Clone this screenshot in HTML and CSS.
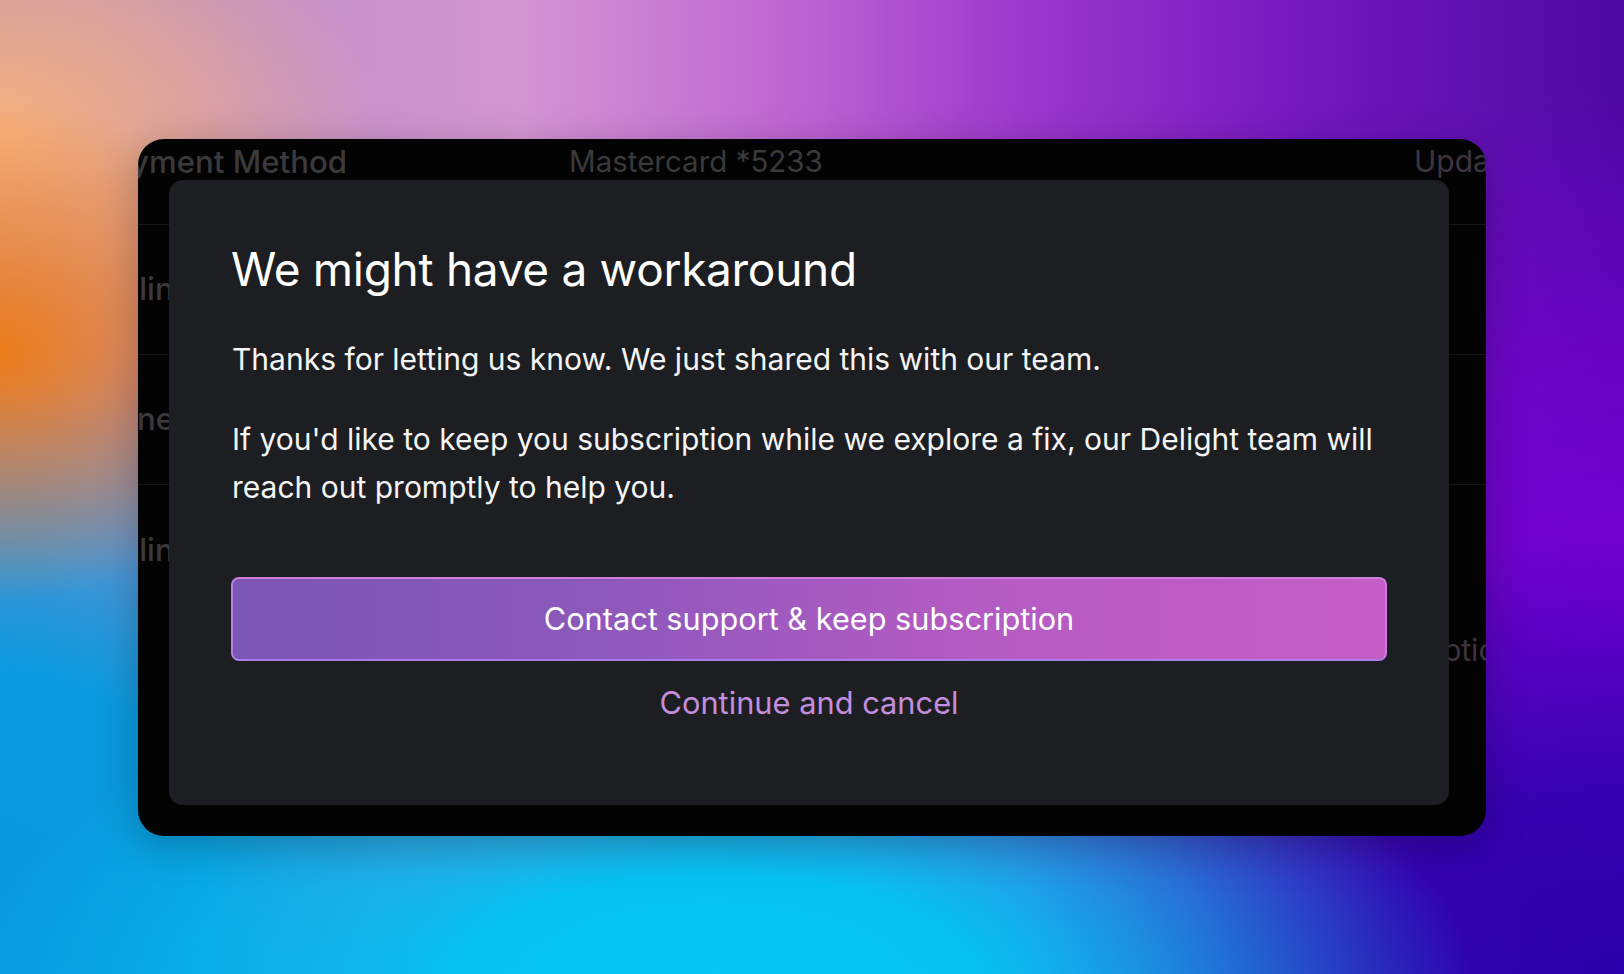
FILE: index.html
```html
<!DOCTYPE html>
<html lang="en">
<head>
<meta charset="utf-8">
<title>We might have a workaround</title>
<link rel="stylesheet" href="styles.css">
</head>
<body>
<main class="stage">
  <section class="window">
    <div class="table">
      <div class="row row-head">
        <span class="cell label">Payment Method</span>
        <span class="cell value">Mastercard *5233</span>
        <span class="cell action">Update</span>
      </div>
      <div class="row">
        <span class="cell label lbl-billing">Billing cycle</span>
        <span class="cell value"></span>
        <span class="cell action"></span>
      </div>
      <div class="row">
        <span class="cell label lbl-renew">Renewal date</span>
        <span class="cell value"></span>
        <span class="cell action"></span>
      </div>
      <div class="row row-plain">
        <span class="cell label lbl-billing">Billing email</span>
        <span class="cell value"></span>
        <span class="cell action"></span>
      </div>
      <div class="row row-last">
        <span class="cell label"></span>
        <span class="cell value"></span>
        <span class="cell action act-options">Options</span>
      </div>
    </div>

    <div class="dialog" role="dialog" aria-labelledby="dlg-title">
      <h1 class="dialog-title" id="dlg-title">We might have a workaround</h1>
      <p class="dialog-text">Thanks for letting us know. We just shared this with our team.</p>
      <p class="dialog-text dialog-text-2">If you'd like to keep you subscription while we explore a fix, our Delight team will reach out promptly to help you.</p>
      <button class="btn-primary" type="button">Contact support &amp; keep subscription</button>
      <button class="btn-link" type="button">Continue and cancel</button>
    </div>
  </section>
</main>
</body>
</html>
```

FILE: styles.css
```css
* { box-sizing: border-box; }

html, body {
  margin: 0;
  padding: 0;
  width: 1624px;
  height: 974px;
  overflow: hidden;
}

body {
  font-family: Inter, "Noto Sans", "Liberation Sans", sans-serif;
  background:
    radial-gradient(ellipse 300px 250px at 0% 36%, #ec7c1a 0%, rgba(236,124,26,0.6) 40%, rgba(236,124,26,0) 100%),
    radial-gradient(ellipse 380px 300px at 0% 14%, #f7b27e 0%, rgba(247,178,126,0.6) 45%, rgba(247,178,126,0) 100%),
    radial-gradient(ellipse 760px 340px at 44% 102%, #04c6f4 0%, #06c2f2 35%, rgba(8,190,242,0) 100%),
    radial-gradient(ellipse 520px 560px at 0% 92%, #0898dc 0%, #0a9ade 40%, rgba(10,152,218,0) 100%),
    radial-gradient(ellipse 640px 440px at 100% 100%, #2c00ac 0%, rgba(44,0,172,0.85) 40%, rgba(44,0,172,0) 100%),
    radial-gradient(ellipse 520px 520px at 100% 62%, #7400d2 0%, rgba(116,0,210,0.7) 45%, rgba(116,0,210,0) 100%),
    linear-gradient(180deg, rgba(0,0,0,0) 55%, rgba(30,90,200,0.55) 100%),
    linear-gradient(90deg, #ad8cc0 0%, #d496d2 32%, #bc62d2 50%, #9c38cc 63%, #7418c0 80%, #4c0aa2 100%);
}

.stage {
  width: 1624px;
  height: 974px;
  display: flex;
  align-items: center;
  justify-content: center;
}

.window {
  position: relative;
  width: 1348px;
  height: 697px;
  background: #030303;
  border-radius: 26px;
  overflow: hidden;
  box-shadow: 0 10px 40px rgba(0, 0, 0, 0.25);
}

/* background settings table (mostly covered) */
.table {
  display: flex;
  flex-direction: column;
  margin-left: -44px;
  color: #3a3a3c;
  font-size: 30px;
}

.row {
  display: grid;
  grid-template-columns: 475px 845px 200px;
  align-items: center;
  height: 130px;
  border-bottom: 1px solid #17171a;
}

.row-head {
  height: 86px;
  align-items: start;
  padding-top: 4px;
}

.row-plain { border-bottom: 0; }

.row-last {
  border-bottom: 0;
  align-items: start;
  padding-top: 17px;
}

.cell { white-space: nowrap; }

.label { font-weight: 500; font-size: 31.2px; }

.lbl-billing { margin-left: 9px; }
.lbl-renew { margin-left: 5px; }

.value { font-weight: 400; font-size: 29.5px; }

.action { font-weight: 400; color: #3c3540; }
.act-options { margin-left: 6px; }

/* dialog */
.dialog {
  position: absolute;
  left: 31px;
  top: 41px;
  width: 1280px;
  height: 625px;
  background: #1d1e21;
  border-radius: 14px;
  padding: 59px 62px 0 62px;
  display: flex;
  flex-direction: column;
  align-items: stretch;
}

.dialog-title {
  margin: 0;
  font-size: 46px;
  line-height: 60px;
  font-weight: 400;
  color: #ffffff;
  letter-spacing: -0.3px;
}

.dialog-text {
  margin: 36px 0 0 1px;
  font-size: 30px;
  line-height: 48px;
  font-weight: 400;
  color: #f4f4f5;
}

.dialog-text-2 {
  margin-top: 32px;
}

.btn-primary {
  margin-top: 66px;
  height: 84px;
  width: 100%;
  border-radius: 8px;
  border: 2px solid #cf7ddc;
  border-bottom-color: #a97de4;
  border-left-color: #b77fe0;
  background: linear-gradient(90deg, #7a56b7 0%, #8b58bb 30%, #b25bc2 62%, #c65dc6 100%);
  color: #ffffff;
  font-family: inherit;
  font-size: 30.7px;
  font-weight: 400;
  cursor: pointer;
}

.btn-link {
  margin: 18px auto 0 auto;
  background: none;
  border: 0;
  padding: 0;
  font-family: inherit;
  font-size: 30.8px;
  line-height: 48px;
  font-weight: 400;
  color: #c48edf;
  cursor: pointer;
}
```
